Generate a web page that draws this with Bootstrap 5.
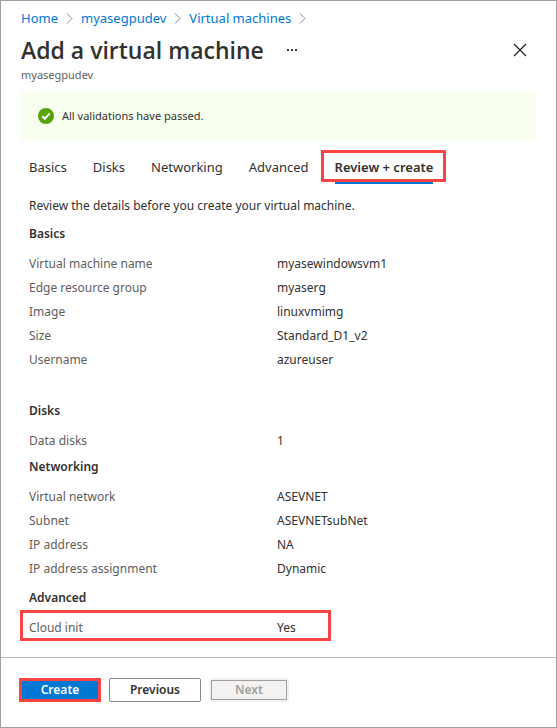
<!DOCTYPE html>
<html lang="en">
<head>
<meta charset="utf-8">
<meta name="viewport" content="width=device-width, initial-scale=1">
<title>Add a virtual machine</title>
<link href="https://cdn.jsdelivr.net/npm/bootstrap@5.3.0/dist/css/bootstrap.min.css" rel="stylesheet">
<style>
  body { font-family: "Segoe UI", "Noto Sans", sans-serif; font-size: 12px; line-height: 20px; color: #323130; background: #fff; }
  .blade { min-height: 100vh; border: 1px solid #a0a0a0; }
  .blade-head { padding: 7px 20px 0; }
  .crumbs { font-size: 13px; gap: 8px; }
  .crumbs a { color: #0078d4; }
  .crumbs svg { display: block; }
  .title-line { height: 44px; }
  .blade-title { font-family: "Segoe UI", "Open Sans", sans-serif; font-size: 23px; line-height: 32px; font-weight: 600; }
  .more { margin-left: 22px; }
  .icon-btn { line-height: 0; color: #201f1e; }
  .subtitle { font-size: 11px; line-height: 16px; color: #605e5c; margin-top: -5px; }
  .passed { background: #f8fff0; margin: 8px 20px 0; padding: 15px 17px; gap: 8px; color: #323130; font-size: 11px; }
  .blade-body { padding: 0 28px; }
  .tabs { gap: 26px; margin-top: 13px; font-size: 13px; }
  .tabs .nav-link { padding: 2px 0 4px; line-height: 22px; color: #323130; border-radius: 0; border-bottom: 2px solid transparent; }
  .tabs .nav-link.active { font-weight: 600; border-color: #0078d4; }
  .marked { position: relative; }
  .marked::after { content: ""; position: absolute; border: 3px solid #fa4343; pointer-events: none; }
  .tab-mark::after { inset: -4px -13px 0 -14px; }
  .row-mark::after { top: -6px; bottom: -1px; left: -9px; width: 311px; }
  .intro { margin: 12px 0 8px; }
  .group-title { font-size: 12px; line-height: 20px; font-weight: 600; margin: 0 0 8px; }
  .group-gap { margin-top: 29px; }
  .facts { margin: 0; line-height: 24px; }
  .fact { display: grid; grid-template-columns: 248px 1fr; }
  .fact dt { font-weight: 400; color: #605e5c; }
  .fact dd { margin: 0; }
  .group-gap-sm { margin-top: 7px; }
  .blade-foot { border-top: 1px solid #b8b8b8; margin-top: 17px; padding: 20px 18px 24px; gap: 8px; }
  .blade-foot .btn { font-size: 12px; line-height: 18px; font-weight: 600; height: 24px; padding: 0; border-radius: 2px; }
  .btn-create { width: 82px; color: #fff; background: #0078d4; border: 3px solid #fa4343; }
  .blade-foot .btn-create { border-radius: 0; }
  .btn-prev { width: 92px; color: #323130; background: #fff; border: 1px solid #8a8886; }
  .blade-foot .btn-next { width: 80px; color: #a19f9d; background: #f3f2f1; border: 2px solid #f3f2f1; box-shadow: inset 0 0 0 1px #a19f9d; opacity: 1; }
</style>
</head>
<body>
<main class="blade d-flex flex-column">
  <header class="blade-head">
    <nav class="crumbs d-flex align-items-center" aria-label="Breadcrumb">
      <a class="text-decoration-none" href="#">Home</a>
      <svg width="7" height="11" viewBox="0 0 7 11" fill="none" stroke="#8a8886" aria-hidden="true"><path d="M1 .5l5 5-5 5"/></svg>
      <a class="text-decoration-none" href="#">myasegpudev</a>
      <svg width="7" height="11" viewBox="0 0 7 11" fill="none" stroke="#8a8886" aria-hidden="true"><path d="M1 .5l5 5-5 5"/></svg>
      <a class="text-decoration-none" href="#">Virtual machines</a>
      <svg width="7" height="11" viewBox="0 0 7 11" fill="none" stroke="#8a8886" aria-hidden="true"><path d="M1 .5l5 5-5 5"/></svg>
    </nav>
    <div class="title-line d-flex align-items-center">
      <h1 class="blade-title m-0">Add a virtual machine</h1>
      <button type="button" class="more icon-btn btn p-0 border-0" aria-label="More actions">
        <svg width="12" height="2" viewBox="0 0 12 2" fill="#3b3a39" aria-hidden="true"><path d="M1 0h2v2H1zM5 0h2v2H5zM9 0h2v2H9z"/></svg>
      </button>
      <button type="button" class="icon-btn btn p-0 border-0 ms-auto me-2" aria-label="Close">
        <svg width="15" height="14" viewBox="0 0 15 14" fill="none" stroke="#201f1e" stroke-width="1.2" aria-hidden="true"><path d="M1 1l12 12M13 1L1 13"/></svg>
      </button>
    </div>
    <p class="subtitle mb-0">myasegpudev</p>
  </header>

  <div class="passed d-flex align-items-center" role="status">
    <svg width="16" height="16" viewBox="0 0 16 16" aria-hidden="true"><circle cx="8" cy="8" r="8" fill="#57a300"/><path d="M4.2 8.2l2.6 2.6 5-5.4" fill="none" stroke="#fff" stroke-width="2"/></svg>
    <span>All validations have passed.</span>
  </div>

  <div class="blade-body">
    <nav class="tabs nav flex-nowrap" aria-label="Steps">
      <a class="nav-link" href="#">Basics</a>
      <a class="nav-link" href="#">Disks</a>
      <a class="nav-link" href="#">Networking</a>
      <a class="nav-link" href="#">Advanced</a>
      <a class="nav-link active marked tab-mark text-nowrap" href="#" aria-current="page">Review + create</a>
    </nav>

    <p class="intro">Review the details before you create your virtual machine.</p>

    <section>
      <h2 class="group-title">Basics</h2>
      <dl class="facts">
        <div class="fact"><dt>Virtual machine name</dt><dd>myasewindowsvm1</dd></div>
        <div class="fact"><dt>Edge resource group</dt><dd>myaserg</dd></div>
        <div class="fact"><dt>Image</dt><dd>linuxvmimg</dd></div>
        <div class="fact"><dt>Size</dt><dd>Standard_D1_v2</dd></div>
        <div class="fact"><dt>Username</dt><dd>azureuser</dd></div>
      </dl>
    </section>
    <section class="group-gap">
      <h2 class="group-title">Disks</h2>
      <dl class="facts">
        <div class="fact"><dt>Data disks</dt><dd>1</dd></div>
      </dl>
    </section>
    <section class="mt-1">
      <h2 class="group-title">Networking</h2>
      <dl class="facts">
        <div class="fact"><dt>Virtual network</dt><dd>ASEVNET</dd></div>
        <div class="fact"><dt>Subnet</dt><dd>ASEVNETsubNet</dd></div>
        <div class="fact"><dt>IP address</dt><dd>NA</dd></div>
        <div class="fact"><dt>IP address assignment</dt><dd>Dynamic</dd></div>
      </dl>
    </section>
    <section class="group-gap-sm">
      <h2 class="group-title">Advanced</h2>
      <dl class="facts">
        <div class="fact marked row-mark"><dt>Cloud init</dt><dd>Yes</dd></div>
      </dl>
    </section>
  </div>

  <footer class="blade-foot d-flex">
    <button type="button" class="btn btn-create">Create</button>
    <button type="button" class="btn btn-prev">Previous</button>
    <button type="button" class="btn btn-next" disabled>Next</button>
  </footer>
</main>
<script src="https://cdn.jsdelivr.net/npm/bootstrap@5.3.0/dist/js/bootstrap.bundle.min.js"></script>
</body>
</html>
